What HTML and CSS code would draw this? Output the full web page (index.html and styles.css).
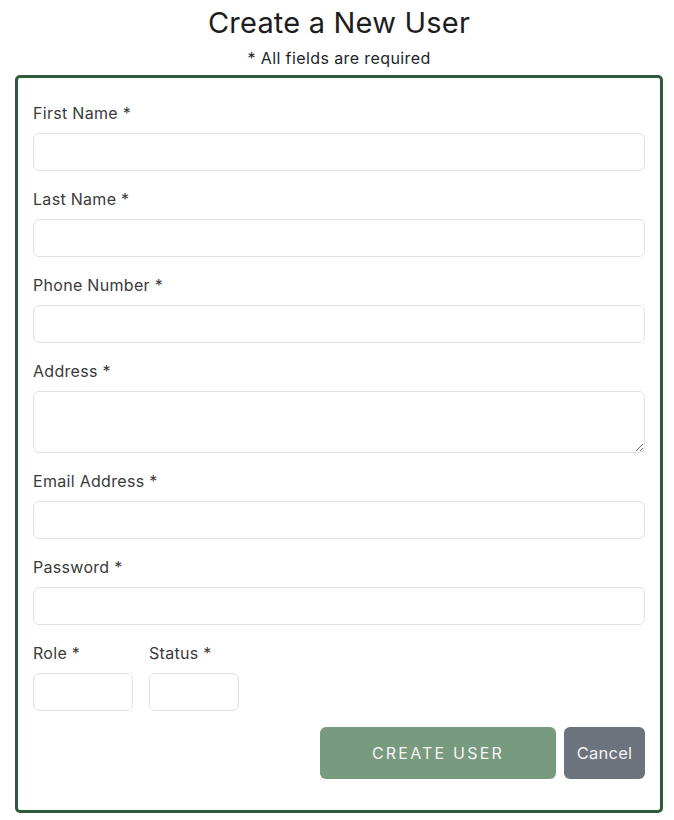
FILE: index.html
```html
<!DOCTYPE html>
<html lang="en">
<head>
<meta charset="utf-8">
<title>Create a New User</title>
<link rel="stylesheet" href="styles.css">
</head>
<body>
<div class="page">
  <h1 class="title">Create a New User</h1>
  <p class="subtitle">* All fields are required</p>
  <form class="card">
    <div class="field">
      <label class="label">First Name *</label>
      <input class="input" type="text">
    </div>
    <div class="field">
      <label class="label">Last Name *</label>
      <input class="input" type="text">
    </div>
    <div class="field">
      <label class="label">Phone Number *</label>
      <input class="input" type="text">
    </div>
    <div class="field">
      <label class="label">Address *</label>
      <textarea class="input textarea"></textarea>
    </div>
    <div class="field">
      <label class="label">Email Address *</label>
      <input class="input" type="text">
    </div>
    <div class="field">
      <label class="label">Password *</label>
      <input class="input" type="password">
    </div>
    <div class="row">
      <div class="field">
        <label class="label">Role *</label>
        <input class="input role" type="text">
      </div>
      <div class="field">
        <label class="label">Status *</label>
        <input class="input status" type="text">
      </div>
    </div>
    <div class="actions">
      <button type="button" class="btn btn-create">CREATE USER</button>
      <button type="button" class="btn btn-cancel">Cancel</button>
    </div>
  </form>
</div>
</body>
</html>
```
FILE: styles.css
```css
* { box-sizing: border-box; }
body {
  margin: 0;
  background: #fff;
  font-family: Inter, "Noto Sans", sans-serif;
  color: #212529;
}
.page {
  width: 648px;
  margin-left: 15px;
  padding-top: 5px;
}
.title {
  margin: 0;
  text-align: center;
  font-size: 29px;
  letter-spacing: 0.2px;
  font-weight: 400;
  line-height: 36px;
  color: #1d1d1d;
}
.subtitle {
  margin: 6px 0 6px;
  text-align: center;
  font-size: 16px;
  letter-spacing: 0.4px;
  line-height: 22px;
  color: #212529;
}
.card {
  border: 3px solid #2e5a3a;
  border-radius: 5px;
  padding: 23px 15px 31px;
}
.field {
  display: flex;
  flex-direction: column;
  margin-bottom: 16px;
}
.label {
  font-size: 16px;
  letter-spacing: 0.3px;
  line-height: 24px;
  color: #3a3a3a;
  margin-bottom: 8px;
}
.input {
  height: 38px;
  width: 100%;
  border: 1px solid #dee2e6;
  border-radius: 6px;
  background: #fff;
  font: inherit;
  padding: 6px 12px;
}
.textarea {
  height: 62px;
  resize: vertical;
  display: block;
}
.row {
  display: flex;
  gap: 16px;
}
.role { width: 100px; }
.status { width: 90px; }
.actions {
  display: flex;
  justify-content: flex-end;
  gap: 8px;
}
.btn {
  height: 52px;
  border: none;
  border-radius: 6px;
  font-family: inherit;
  font-size: 16px;
  color: #f4f4f4;
  cursor: pointer;
}
.btn-create {
  width: 236px;
  background: #789a7f;
  letter-spacing: 2.2px;
}
.btn-cancel {
  width: 81px;
  background: #6c737c;
  font-size: 16.5px;
  letter-spacing: 0.2px;
}
```
